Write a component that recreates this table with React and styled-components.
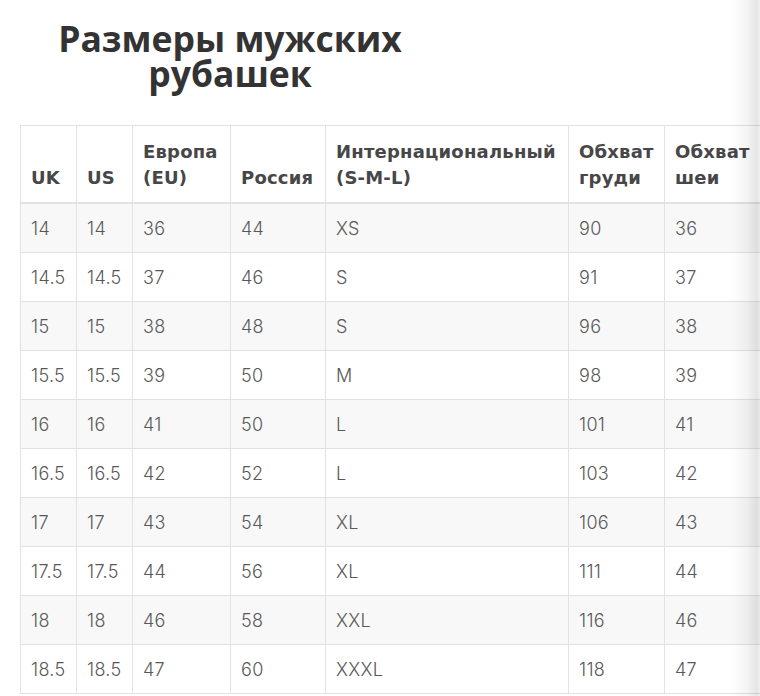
import React from "react";
import styled, { createGlobalStyle } from "styled-components";

const GlobalStyle = createGlobalStyle`
  html, body {
    margin: 0;
    padding: 0;
    background: #ffffff;
  }
  body {
    font-family: "Inter", "Liberation Sans", sans-serif;
    overflow: hidden;
  }
`;

const Page = styled.div`
  width: 760px;
  height: 696px;
  overflow: hidden;
`;

const Title = styled.h1`
  width: 460px;
  margin: 21px 0 0;
  font-family: "Open Sans", "Liberation Sans", sans-serif;
  font-size: 35.5px;
  line-height: 35px;
  font-weight: 700;
  color: #333333;
  text-align: center;
`;

const TableWrap = styled.div`
  margin: 34px 0 0 20px;
  overflow: hidden;
`;

const Table = styled.table`
  border-collapse: collapse;
  table-layout: fixed;
  width: 860px;
`;

const HeadCell = styled.th`
  border: 1px solid #e2e2e2;
  border-bottom: 2px solid #e2e2e2;
  height: 65px;
  padding: 0 10px 11px;
  vertical-align: bottom;
  text-align: left;
  font-family: "DejaVu Sans", "Inter", sans-serif;
  font-size: 18px;
  line-height: 26px;
  font-weight: 700;
  letter-spacing: 0.2px;
  color: #474747;
  white-space: nowrap;
`;

const Row = styled.tr`
  background: ${(p) => (p.$odd ? "#f8f8f8" : "#ffffff")};
`;

const Cell = styled.td`
  border: 1px solid #e2e2e2;
  height: 48px;
  padding: 0 10px;
  font-size: 18px;
  font-weight: 300;
  letter-spacing: 0.3px;
  color: #585858;
  white-space: nowrap;
`;

const EdgeShade = styled.div`
  position: fixed;
  top: 0;
  right: 0;
  width: 30px;
  height: 100%;
  pointer-events: none;
  background: linear-gradient(
    to right,
    rgba(0, 0, 0, 0) 0%,
    rgba(0, 0, 0, 0.04) 55%,
    rgba(0, 0, 0, 0.1) 90%,
    rgba(0, 0, 0, 0.06) 100%
  );
`;

const columns = [
  { w: 56, label: ["UK"] },
  { w: 56, label: ["US"] },
  { w: 98, label: ["Европа", "(EU)"] },
  { w: 95, label: ["Россия"] },
  { w: 243, label: ["Интернациональный", "(S-M-L)"] },
  { w: 96, label: ["Обхват", "груди"] },
  { w: 216, label: ["Обхват", "шеи"] },
];

const rows = [
  ["14", "14", "36", "44", "XS", "90", "36"],
  ["14.5", "14.5", "37", "46", "S", "91", "37"],
  ["15", "15", "38", "48", "S", "96", "38"],
  ["15.5", "15.5", "39", "50", "M", "98", "39"],
  ["16", "16", "41", "50", "L", "101", "41"],
  ["16.5", "16.5", "42", "52", "L", "103", "42"],
  ["17", "17", "43", "54", "XL", "106", "43"],
  ["17.5", "17.5", "44", "56", "XL", "111", "44"],
  ["18", "18", "46", "58", "XXL", "116", "46"],
  ["18.5", "18.5", "47", "60", "XXXL", "118", "47"],
];

export default function App() {
  return (
    <Page>
      <GlobalStyle />
      <Title>
        Размеры мужских
        <br />
        рубашек
      </Title>
      <TableWrap>
        <Table>
          <colgroup>
            {columns.map((c, i) => (
              <col key={i} style={{ width: c.w }} />
            ))}
          </colgroup>
          <thead>
            <tr>
              {columns.map((c, i) => (
                <HeadCell key={i}>
                  {c.label.map((l, j) => (
                    <React.Fragment key={j}>
                      {j > 0 && <br />}
                      {l}
                    </React.Fragment>
                  ))}
                </HeadCell>
              ))}
            </tr>
          </thead>
          <tbody>
            {rows.map((r, i) => (
              <Row key={i} $odd={i % 2 === 0}>
                {r.map((v, j) => (
                  <Cell key={j}>{v}</Cell>
                ))}
              </Row>
            ))}
          </tbody>
        </Table>
      </TableWrap>
      <EdgeShade />
    </Page>
  );
}
